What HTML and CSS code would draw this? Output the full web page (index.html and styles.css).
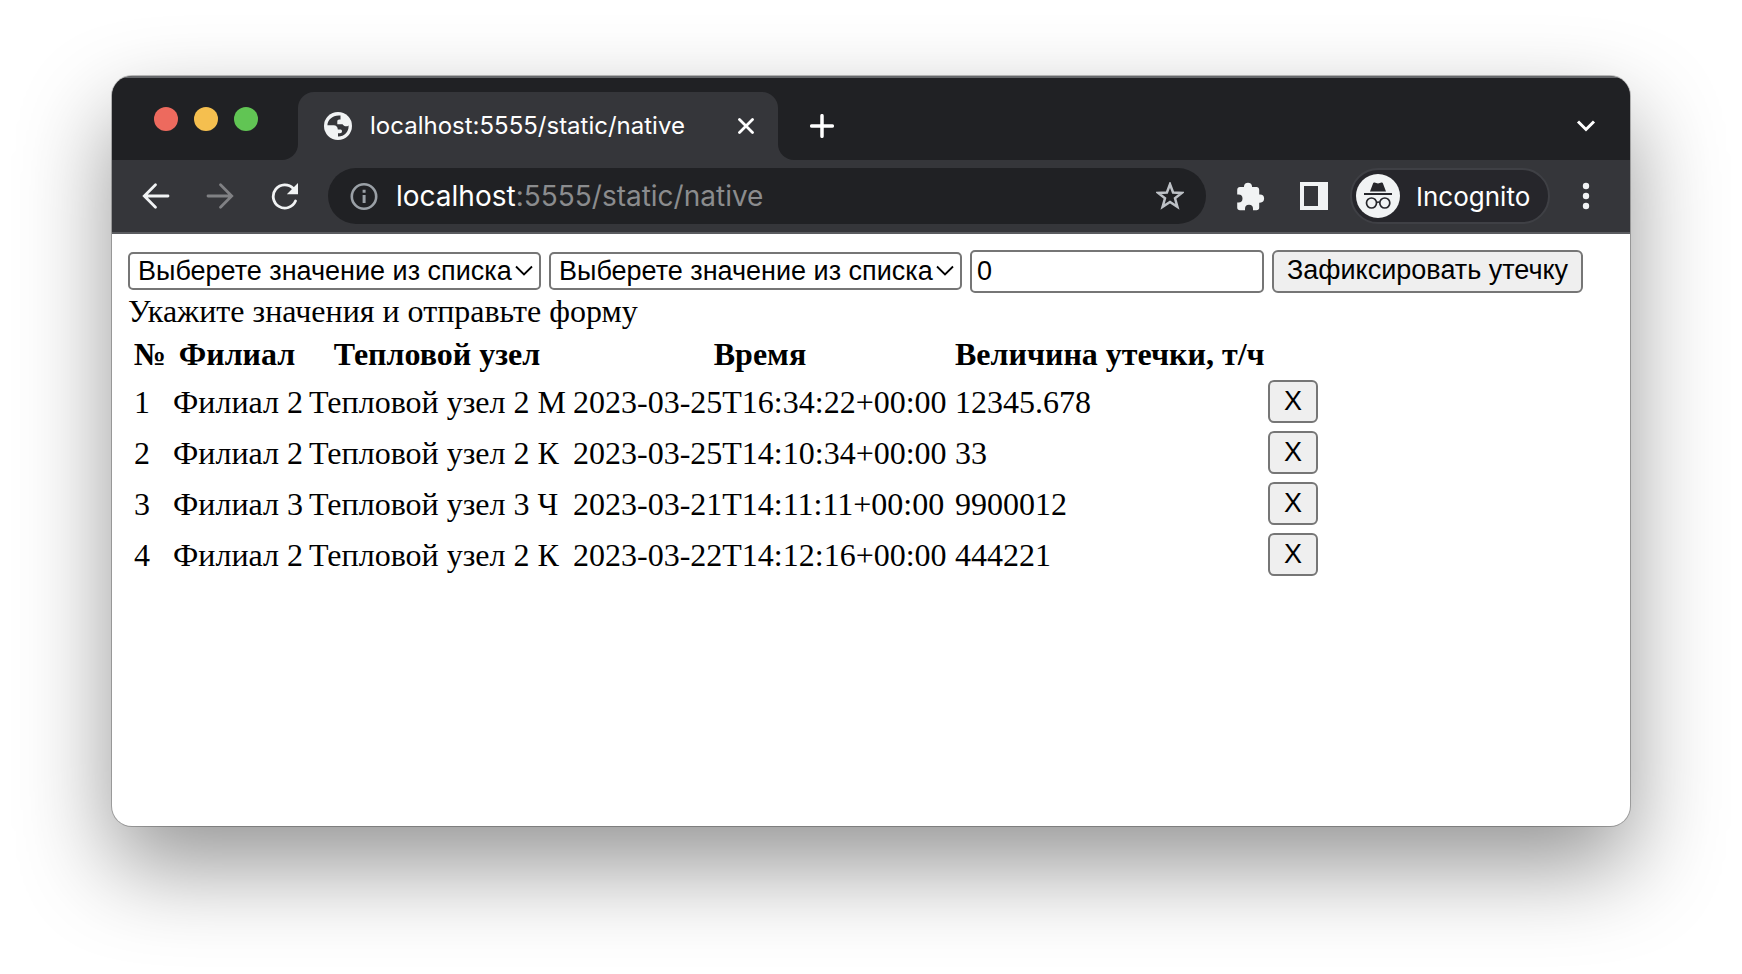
FILE: index.html
```
<!DOCTYPE html>
<html lang="ru">
<head>
<meta charset="utf-8">
<title>localhost:5555/static/native</title>
<link rel="stylesheet" href="styles.css">
</head>
<body>
<div class="window">
  <header class="tabstrip">
    <div class="lights">
      <button class="light light-close" aria-label="Close window"></button>
      <button class="light light-min" aria-label="Minimize"></button>
      <button class="light light-max" aria-label="Zoom"></button>
    </div>
    <div class="tab-slot">
      <div class="tab">
        <svg class="icon28" viewBox="0 0 28 28"><circle cx="14" cy="14" r="14" fill="#f1f3f4"/><path d="M16.500 3.600C9 2.800 3.700 7.500 3.400 13.300h6.200c2.600 0 4.200 1.600 4.200 4.200h2.400c1.200 0 1.800.6 1.800 1.800 0 1.300-.7 2-2 2h-2v3.200c6.100.2 10.600-4.300 10.600-10.300v-.7c-1.400 1-3 1.200-4.600.2l-1.500-1.400H13.300V9.600c0-1.300.7-2 2-2h1.200z" fill="#35363a"/></svg>
        <span class="tab-title">localhost:5555/static/native</span>
        <button class="tab-close" aria-label="Close tab"><svg width="16" height="16" viewBox="0 0 16 16"><path d="M1.500 1.500l13 13M14.500 1.500l-13 13" stroke="#fff" stroke-width="2.800" stroke-linecap="round"/></svg></button>
      </div>
    </div>
    <div class="strip-rest">
      <button aria-label="New tab"><svg width="24" height="24" viewBox="0 0 24 24"><path d="M12 1.700v20.600M1.700 12h20.600" stroke="#fff" stroke-width="3.500" stroke-linecap="round"/></svg></button>
      <button aria-label="Search tabs"><svg width="20" height="12" viewBox="0 0 20 12"><path d="M2 1.500l8 8 8-8" fill="none" stroke="#fff" stroke-width="3"/></svg></button>
    </div>
  </header>
  <nav class="toolbar">
    <button class="nav-btn" aria-label="Back"><svg class="icon28" viewBox="0 0 28 28"><path d="M26 14H3M13.500 2.800L2.300 14l11.200 11.200" fill="none" stroke="#f1f3f4" stroke-width="2.800" stroke-linecap="round"/></svg></button>
    <button class="nav-btn" aria-label="Forward"><svg class="icon28" viewBox="0 0 28 28"><path d="M2 14h23M14.500 2.800L25.700 14 14.500 25.200" fill="none" stroke="#808184" stroke-width="2.800" stroke-linecap="round"/></svg></button>
    <button class="nav-btn" aria-label="Reload"><svg class="icon28" viewBox="0 0 28 28"><path d="M25.500 19A11.600 11.600 0 1 1 23.300 6.500" fill="none" stroke="#f1f3f4" stroke-width="2.800" stroke-linecap="round"/><path d="M28 1v11.200H16.800z" fill="#f1f3f4"/></svg></button>
    <div class="omnibox">
      <svg class="icon28" viewBox="0 0 28 28"><circle cx="14" cy="14.500" r="12.200" fill="none" stroke="#9aa0a6" stroke-width="2.600"/><path d="M12.600 7.800h3v3h-3zM12.600 13h3v8h-3z" fill="#9aa0a6"/></svg>
      <div class="url"><span class="host">localhost</span>:5555/static/native</div>
      <button aria-label="Bookmark"><svg class="icon28" viewBox="0 0 28 28"><path d="M14 2.200l3.100 8.300 8.700.4-6.800 5.400 2.400 8.500-7.400-4.900-7.400 4.900L9 16.300l-6.800-5.400 8.700-.4z" fill="none" stroke="#bdc1c6" stroke-width="2.500"/></svg></button>
    </div>
    <div class="actions">
      <button aria-label="Extensions"><svg class="icon30" viewBox="0 0 30 30"><path d="M24 13.500h-.8V9c0-1.700-1-3-2.800-3H16V5a4.100 4.100 0 0 0-8 0v1H4C2.300 6 1.200 7.300 1.200 9v4.500h1.300a4 4 0 0 1 0 8H1.200v5c0 1.700 1.100 2.800 2.800 2.800h5v-1.500a4 4 0 0 1 8 0v1.500h3.400c1.800 0 2.800-1.100 2.800-2.800v-4.800h.8a4.100 4.100 0 0 0 0-8.200z" fill="#f1f3f4"/></svg></button>
      <button aria-label="Side panel"><svg class="icon28" viewBox="0 0 28 28"><path d="M0 0h28v28H0zM4 4v20h14V4z" fill="#f1f3f4" fill-rule="evenodd"/></svg></button>
    </div>
    <button class="profile">
      <svg width="44" height="44" viewBox="0 0 44 44"><circle cx="22" cy="22" r="22" fill="#f1f3f4"/><path d="M14 17.500l3.200-8.400c.2-.6.7-.8 1.300-.6l3.500 1 3.500-1c.6-.2 1.100 0 1.300.6l3.200 8.400z" fill="#26262b"/><path d="M8 20h28" stroke="#26262b" stroke-width="2"/><g fill="none" stroke="#26262b" stroke-width="1.700"><circle cx="15.500" cy="29" r="5"/><circle cx="28.800" cy="29" r="5"/><path d="M20.500 28.500q1.600-1 3.300 0"/></g></svg>
      <span>Incognito</span>
    </button>
    <button class="menu" aria-label="Menu"><svg width="8" height="28" viewBox="0 0 8 28"><g fill="#f1f3f4"><circle cx="4" cy="4" r="3.200"/><circle cx="4" cy="14" r="3.200"/><circle cx="4" cy="24" r="3.200"/></g></svg></button>
  </nav>
  <main class="page">
    <form class="leak-form">
      <div class="picker">
        <select aria-label="Филиал"><option>Выберете значение из списка</option></select>
        <svg width="18" height="12" viewBox="0 0 18 12"><path d="M1 1.500l8 8 8-8" fill="none" stroke="#000" stroke-width="1.800"/></svg>
      </div>
      <div class="picker">
        <select aria-label="Тепловой узел"><option>Выберете значение из списка</option></select>
        <svg width="18" height="12" viewBox="0 0 18 12"><path d="M1 1.500l8 8 8-8" fill="none" stroke="#000" stroke-width="1.800"/></svg>
      </div>
      <input class="amount" type="text" value="0" aria-label="Величина утечки">
      <button class="btn submit" type="button">Зафиксировать утечку</button>
    </form>
    <div class="status">Укажите значения и отправьте форму</div>
    <table class="leaks">
      <colgroup>
        <col class="col-num"><col class="col-branch"><col class="col-node"><col class="col-time"><col class="col-amount"><col class="col-action">
      </colgroup>
      <thead>
        <tr><th>№</th><th>Филиал</th><th>Тепловой узел</th><th>Время</th><th>Величина утечки, т/ч</th><th></th></tr>
      </thead>
      <tbody>
        <tr><td>1</td><td>Филиал 2</td><td>Тепловой узел 2 М</td><td>2023-03-25T16:34:22+00:00</td><td>12345.678</td><td><button class="btn">X</button></td></tr>
        <tr><td>2</td><td>Филиал 2</td><td>Тепловой узел 2 К</td><td>2023-03-25T14:10:34+00:00</td><td>33</td><td><button class="btn">X</button></td></tr>
        <tr><td>3</td><td>Филиал 3</td><td>Тепловой узел 3 Ч</td><td>2023-03-21T14:11:11+00:00</td><td>9900012</td><td><button class="btn">X</button></td></tr>
        <tr><td>4</td><td>Филиал 2</td><td>Тепловой узел 2 К</td><td>2023-03-22T14:12:16+00:00</td><td>444221</td><td><button class="btn">X</button></td></tr>
      </tbody>
    </table>
  </main>
</div>
</body>
</html>
```
FILE: styles.css
```
* { box-sizing: border-box; }

body {
  margin: 0;
  min-height: 100vh;
  padding: 76px 112px 148px;
  display: flex;
  background: #fff;
}

svg { display: block; flex: none; }
.icon28 { width: 28px; height: 28px; }
.icon30 { width: 30px; height: 30px; }

.window {
  flex: 1;
  min-width: 0;
  display: flex;
  flex-direction: column;
  overflow: hidden;
  border-radius: 20px;
  background: #fff;
  box-shadow: 0 0 0 1px rgba(0, 0, 0, 0.25), 0 40px 92px rgba(0, 0, 0, 0.42);
}

.tabstrip button,
.toolbar button {
  border: 0;
  padding: 0;
  background: none;
  color: inherit;
  font: inherit;
}

/* Tab strip */
.tabstrip {
  display: flex;
  height: 84px;
  background: #35363a;
  border-top: 2px solid #66686b;
  font-family: Inter, "Noto Sans", sans-serif;
  color: #fff;
}

.lights {
  display: flex;
  gap: 16px;
  width: 186px;
  padding: 29px 0 0 42px;
  background: #202124;
  border-bottom-right-radius: 16px;
}

.tabstrip .light { width: 24px; height: 24px; border-radius: 50%; }
.tabstrip .light-close { background: #ed6a5e; }
.tabstrip .light-min { background: #f5bf4f; }
.tabstrip .light-max { background: #61c554; }

.tab-slot {
  width: 480px;
  padding-top: 14px;
  background: #202124;
}

.tab {
  display: flex;
  align-items: center;
  height: 68px;
  padding: 0 24px 0 26px;
  border-radius: 16px 16px 0 0;
  background: #35363a;
}

.tab-title { flex: 1; margin-left: 18px; font-size: 24px; line-height: 32px; white-space: nowrap; }

.strip-rest {
  flex: 1;
  display: flex;
  align-items: center;
  justify-content: space-between;
  padding: 14px 34px 0 32px;
  border-bottom-left-radius: 16px;
  background: #202124;
}

/* Toolbar */
.toolbar {
  display: flex;
  align-items: center;
  height: 74px;
  padding: 0 40px 0 30px;
  background: #35363a;
  border-bottom: 2px solid #5b5c60;
  font-family: Inter, "Noto Sans", sans-serif;
  color: #fff;
}

.nav-btn { margin-right: 36px; }
.nav-btn + .nav-btn + .nav-btn { margin-right: 30px; }

.omnibox {
  flex: 1;
  display: flex;
  align-items: center;
  height: 56px;
  padding: 0 22px;
  border-radius: 28px;
  background: #202124;
}

.url { flex: 1; margin-left: 18px; font-size: 28px; line-height: 36px; color: #8b8c8e; white-space: nowrap; }
.host { color: #fff; }

.actions { display: flex; align-items: center; gap: 34px; margin: 0 22px 0 30px; }

.toolbar .profile {
  display: flex;
  align-items: center;
  gap: 16px;
  width: 200px;
  height: 56px;
  padding-left: 4px;
  border: 2px solid #3f4045;
  border-radius: 28px;
  background: #26262b;
  font-size: 26px;
}

.menu { margin-left: 32px; }

/* Page */
.page {
  flex: 1;
  padding: 16px;
  font-family: "Liberation Serif", serif;
  font-size: 32px;
  line-height: 36px;
  color: #000;
}

.leak-form { display: flex; align-items: center; gap: 8px; height: 42px; }

.leak-form select,
.amount,
.btn {
  margin: 0;
  border: 2px solid #767676;
  font-family: "Liberation Sans", sans-serif;
  font-size: 27px;
  line-height: 30px;
  color: #000;
}

.picker { display: grid; align-items: center; }
.picker > * { grid-area: 1 / 1; }
.picker svg { justify-self: end; margin-right: 8px; pointer-events: none; }

.leak-form select {
  appearance: none;
  width: 413px;
  height: 38px;
  padding: 0 24px 0 8px;
  border-radius: 5px;
  background: #fff;
}

.amount {
  width: 294px;
  height: 43px;
  padding: 2px 5px;
  border-radius: 5px;
  background: #fff;
}

.btn {
  height: 43px;
  padding: 2px 14px 4px;
  border-radius: 6px;
  background: #efefef;
  white-space: nowrap;
}

.submit { padding: 2px 13px 4px; }

.status { line-height: 38px; }

.leaks { table-layout: fixed; width: 1196px; border-spacing: 4px; }
.leaks th,
.leaks td { padding: 2px; white-space: nowrap; }
.leaks .btn { display: block; }
.col-num { width: 35px; }
.col-branch { width: 132px; }
.col-node { width: 260px; }
.col-time { width: 378px; }
.col-amount { width: 309px; }
.col-action { width: 54px; }
```
